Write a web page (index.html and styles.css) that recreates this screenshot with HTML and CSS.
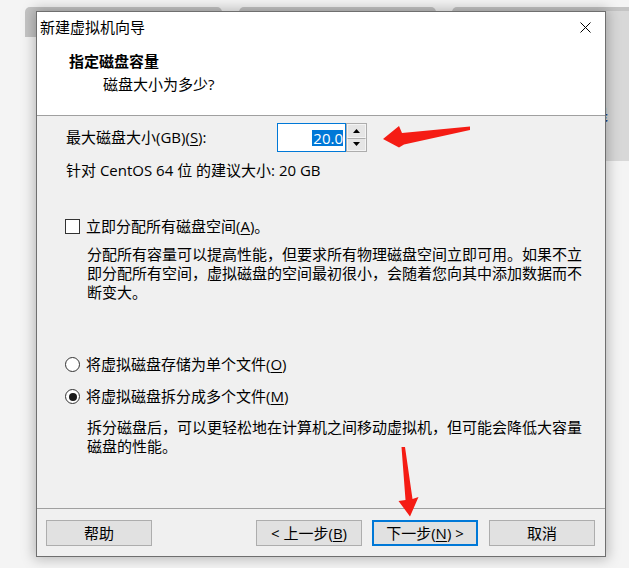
FILE: index.html
```html
<!DOCTYPE html>
<html lang="zh-CN">
<head>
<meta charset="utf-8">
<title>新建虚拟机向导</title>
<link rel="stylesheet" href="styles.css">
</head>
<body>
<div class="tab tab1"></div>
<div class="tab tab2"></div>
<div class="tab tab3"></div>
<div class="side-win"><span class="side-glyph">是</span></div>

<div class="dialog">
  <div class="top">
    <div class="titlebar">
      <span class="title">新建虚拟机向导</span>
      <svg class="close" width="11" height="11" viewBox="0 0 11 11"><path d="M0.5 0.5 L10.5 10.5 M10.5 0.5 L0.5 10.5" stroke="#000" stroke-width="1" fill="none"/></svg>
    </div>
    <div class="header">
      <div class="h-title">指定磁盘容量</div>
      <div class="h-sub">磁盘大小为多少?</div>
    </div>
  </div>

  <div class="content">
    <div class="size-row">
      <span class="size-label">最大磁盘大小(GB)(<u>S</u>):</span>
      <div class="spin">
        <div class="spin-input"><span class="sel">20.0</span></div>
        <div class="spin-btns">
          <div class="sb"><svg width="7" height="4" viewBox="0 0 7 4"><path d="M3.5 0 L7 4 L0 4 Z" fill="#000"/></svg></div>
          <div class="sb"><svg width="7" height="4" viewBox="0 0 7 4"><path d="M0 0 L7 0 L3.5 4 Z" fill="#000"/></svg></div>
        </div>
      </div>
    </div>
    <div class="rec">针对 CentOS 64 位 的建议大小: 20 GB</div>

    <div class="opt check-opt"><span class="checkbox"></span><span>立即分配所有磁盘空间(<u>A</u>)。</span></div>
    <div class="desc">分配所有容量可以提高性能，但要求所有物理磁盘空间立即可用。如果不立<br>即分配所有空间，虚拟磁盘的空间最初很小，会随着您向其中添加数据而不<br>断变大。</div>

    <div class="opt r1"><span class="radio"></span><span>将虚拟磁盘存储为单个文件(<u>O</u>)</span></div>
    <div class="opt r2"><span class="radio on"></span><span>将虚拟磁盘拆分成多个文件(<u>M</u>)</span></div>
    <div class="desc desc2">拆分磁盘后，可以更轻松地在计算机之间移动虚拟机，但可能会降低大容量<br>磁盘的性能。</div>
  </div>

  <div class="footer">
    <button class="btn">帮助</button>
    <div class="nav">
      <button class="btn">&lt; 上一步(<u>B</u>)</button>
      <button class="btn primary">下一步(<u>N</u>) &gt;</button>
      <button class="btn">取消</button>
    </div>
  </div>
</div>

<svg class="arrows" width="629" height="568" viewBox="0 0 629 568">
  <polygon points="383,139 399,126 402,133 470,126.5 470,130 404,144.5 399,147.5" fill="#f51c14"/>
  <polygon points="401.5,447 405,447 412.5,499 418.5,497 410,516.5 398.5,501 405.5,500" fill="#f51c14"/>
</svg>
</body>
</html>
```

FILE: styles.css
```css
body {
  margin: 0;
  width: 629px;
  height: 568px;
  overflow: hidden;
  position: relative;
  background: #f4f4f4;
  font-family: "Open Sans", "Noto Sans CJK SC", sans-serif;
  font-size: 15px;
  color: #000;
}

u {
  text-decoration: underline;
  text-underline-offset: 2px;
}

/* background windows */
.tab {
  position: absolute;
  top: 7px;
  height: 30px;
  background: #c4c4c4;
  border-radius: 5px 5px 0 0;
}
.tab1 { left: 25px; width: 197px; }
.tab2 { left: 239px; width: 197px; }
.tab3 { left: 452px; width: 200px; }

.side-win {
  position: absolute;
  left: 540px;
  top: 11px;
  width: 100px;
  height: 150px;
  background: #d8d8d8;
  overflow: hidden;
}
.side-glyph {
  position: absolute;
  left: 53px;
  top: 94px;
  font-size: 15px;
  line-height: 19px;
  color: #1f3d86;
  font-weight: bold;
}

/* dialog */
.dialog {
  position: relative;
  z-index: 1;
  margin: 11px 0 0 36px;
  width: 570px;
  height: 546px;
  box-sizing: border-box;
  border: 1px solid #6f6f6f;
  background: #f0f0f0;
  box-shadow: 0 0 12px 2px rgba(0, 0, 0, 0.25);
  display: flex;
  flex-direction: column;
}

.top {
  flex: none;
  height: 103px;
  background: #fff;
  border-bottom: 1px solid #a0a0a0;
}

.titlebar {
  height: 30px;
  display: flex;
  align-items: center;
  justify-content: space-between;
  padding-left: 3px;
  line-height: 19px;
}
.close {
  margin-right: 14px;
}

.header {
  padding: 10px 0 0 32px;
  line-height: 19px;
}
.h-title {
  font-weight: bold;
}
.h-sub {
  margin-top: 4px;
  padding-left: 34px;
}

.content {
  flex: none;
  height: 393px;
  box-sizing: border-box;
  padding: 7px 0 0 29px;
  border-bottom: 1px solid #a0a0a0;
  line-height: 19px;
}

.size-row {
  display: flex;
  align-items: center;
  height: 29px;
}
.size-label {
  width: 211px;
  flex: none;
}
.spin {
  display: flex;
}
.spin-input {
  width: 69px;
  height: 29px;
  box-sizing: border-box;
  border: 1px solid #0078d7;
  background: #fff;
  display: flex;
  align-items: center;
  justify-content: flex-end;
  padding-right: 2px;
}
.sel {
  background: #0078d7;
  color: #fff;
  line-height: 16px;
  padding: 0 0 0 1px;
}
.spin-btns {
  width: 21px;
  height: 29px;
  box-sizing: border-box;
  border: 1px solid #adadad;
  display: flex;
  flex-direction: column;
}
.sb {
  flex: 1;
  background: #e5e5e5;
  display: flex;
  align-items: center;
  justify-content: center;
  border: 1px solid #f4f4f4;
}
.sb + .sb {
  border-top: 1px solid #adadad;
}

.rec {
  margin-top: 9px;
}

.opt {
  display: flex;
  align-items: center;
}
.check-opt { margin-top: 37px; }
.r1 { margin-top: 53px; }
.r2 { margin-top: 13px; }

.checkbox {
  flex: none;
  width: 15px;
  height: 15px;
  box-sizing: border-box;
  border: 1px solid #333;
  background: #fff;
  margin: 0 6px 0 -1px;
}
.radio {
  flex: none;
  width: 15px;
  height: 15px;
  box-sizing: border-box;
  border: 1px solid #333;
  border-radius: 50%;
  background: #fff;
  margin: 0 6px 0 -1px;
  display: flex;
  align-items: center;
  justify-content: center;
}
.radio.on::after {
  content: "";
  width: 8px;
  height: 8px;
  border-radius: 50%;
  background: #1a1a1a;
}

.desc {
  margin-top: 9px;
  padding-left: 21px;
  white-space: nowrap;
}
.desc2 {
  margin-top: 12px;
}

.footer {
  flex: 1;
  display: flex;
  justify-content: space-between;
  align-items: flex-start;
  padding: 11px 10px 0 9px;
}
.nav {
  display: flex;
  gap: 11px;
}
.nav .btn:first-child {
  margin-right: -1px;
}
.btn {
  width: 106px;
  height: 26px;
  box-sizing: border-box;
  border: 1px solid #adadad;
  background: #e1e1e1;
  font: inherit;
  color: #000;
  line-height: 19px;
  padding: 0;
}
.btn.primary {
  border: 2px solid #0078d7;
}

.arrows {
  position: absolute;
  left: 0;
  top: 0;
  z-index: 2;
  pointer-events: none;
}
```
